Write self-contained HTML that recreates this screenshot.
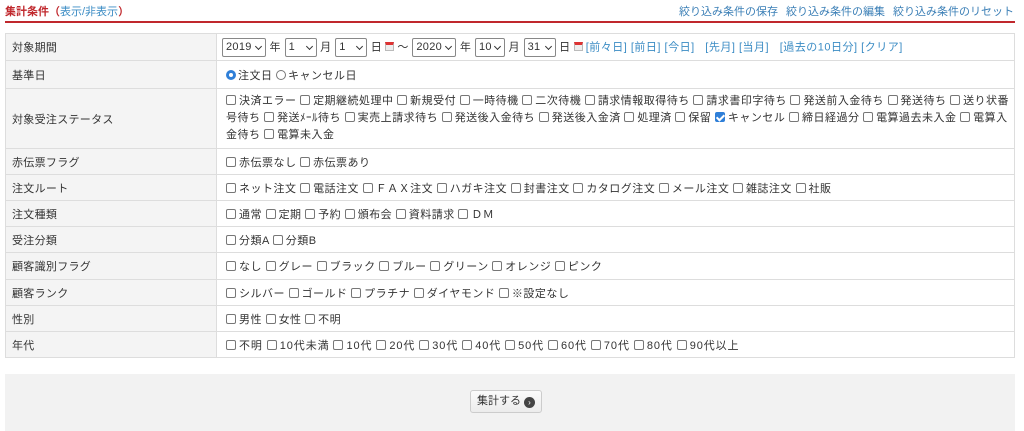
<!DOCTYPE html>
<html><head><meta charset="utf-8"><style>
*{margin:0;padding:0;box-sizing:border-box}
body{width:1024px;height:431px;overflow:hidden;background:#fff;font-family:"Liberation Sans","Noto Sans CJK JP",sans-serif;font-size:11px;color:#333;position:relative}
.title{position:absolute;left:5px;top:3px;font-size:11px;font-weight:bold;color:#c0282d}
.title span{color:#3b8cc4;font-weight:normal}
.links{position:absolute;right:10px;top:3px;color:#3b7fb6;font-size:11px;word-spacing:0}
.links span{margin-left:8px}
.rule{position:absolute;left:5px;top:21px;width:1010px;height:2px;background:#c0282d}
table{position:absolute;left:5px;top:33px;width:1010px;border-collapse:collapse}
td{border:1px solid #ddd;vertical-align:middle;white-space:nowrap}
td.l{width:211px;background:#f4f4f4;padding-left:6px;letter-spacing:0.3px}
td.v{padding-left:9px;background:#fff;letter-spacing:0.5px}
.cb{display:inline-block;width:10px;height:10px;border:1px solid #777;border-radius:2px;vertical-align:-1px;margin-right:3px;background:#fff}
.cb.on{background:#2f7fd8;border-color:#2f7fd8;position:relative}
.cb.on:after{content:"";position:absolute;left:2px;top:0px;width:3px;height:6px;border:solid #fff;border-width:0 2px 2px 0;transform:rotate(45deg)}
.rd{display:inline-block;width:10px;height:10px;border:1px solid #777;border-radius:50%;vertical-align:-1px;margin-right:2px}
.rd.on{border:3px solid #2f7fd8}
.sel{display:inline-block;height:19px;border:1px solid #888;border-radius:2px;vertical-align:middle;padding:0 3px;line-height:17px;font-size:11px;position:relative;letter-spacing:0.3px}
.sel:after{content:"";position:absolute;right:4px;top:5px;width:4px;height:4px;border:solid #333;border-width:0 1.5px 1.5px 0;transform:rotate(45deg)}
.cal{display:inline-block;width:9px;height:9px;border:1px solid #bbb;border-top:3px solid #d33;vertical-align:-1px;margin:0 3px;background:#eee}
.a{color:#3b8cc4;letter-spacing:0.5px}
.bot{position:absolute;left:5px;top:374px;width:1010px;height:57px;background:#f2f2f2}
.btn{position:absolute;left:465px;top:16px;width:72px;height:23px;border:1px solid #ccc;border-radius:3px;background:linear-gradient(#fbfbfb,#ececec);text-align:center;line-height:21px;font-size:11px;color:#333}
.btn i{display:inline-block;width:11px;height:11px;border-radius:50%;background:#444;color:#fff;font-style:normal;font-size:8px;line-height:11px;vertical-align:-1px;margin-left:3px}
</style></head><body>
<div class="title">集計条件（<span>表示/非表示</span>）</div>
<div class="links"><span>絞り込み条件の保存</span><span>絞り込み条件の編集</span><span>絞り込み条件のリセット</span></div>
<div class="rule"></div>
<table>
<tr style="height:27px"><td class="l">対象期間</td><td class="v" style="padding-left:5px"><span class="sel" style="width:44px">2019</span> 年 <span class="sel" style="width:32px">1</span> 月 <span class="sel" style="width:32px">1</span> 日<span class="cal"></span>～ <span class="sel" style="width:44px">2020</span> 年 <span class="sel" style="width:30px">10</span> 月 <span class="sel" style="width:32px">31</span> 日<span class="cal"></span><span class="a">[前々日] [前日] [今日] &nbsp; [先月] [当月] &nbsp; [過去の10日分] [クリア]</span></td></tr>
<tr style="height:28px"><td class="l">基準日</td><td class="v"><span class="rd on"></span>注文日 <span class="rd"></span>キャンセル日</td></tr>
<tr style="height:60px"><td class="l">対象受注ステータス</td><td class="v" style="line-height:17px"><span class="cb"></span>決済エラー <span class="cb"></span>定期継続処理中 <span class="cb"></span>新規受付 <span class="cb"></span>一時待機 <span class="cb"></span>二次待機 <span class="cb"></span>請求情報取得待ち <span class="cb"></span>請求書印字待ち <span class="cb"></span>発送前入金待ち <span class="cb"></span>発送待ち <span class="cb"></span>送り状番<br>号待ち <span class="cb"></span>発送ﾒｰﾙ待ち <span class="cb"></span>実売上請求待ち <span class="cb"></span>発送後入金待ち <span class="cb"></span>発送後入金済 <span class="cb"></span>処理済 <span class="cb"></span>保留 <span class="cb on"></span>キャンセル <span class="cb"></span>締日経過分 <span class="cb"></span>電算過去未入金 <span class="cb"></span>電算入<br>金待ち <span class="cb"></span>電算未入金</td></tr>
<tr style="height:26px"><td class="l">赤伝票フラグ</td><td class="v"><span class="cb"></span>赤伝票なし <span class="cb"></span>赤伝票あり</td></tr>
<tr style="height:26px"><td class="l">注文ルート</td><td class="v"><span class="cb"></span>ネット注文 <span class="cb"></span>電話注文 <span class="cb"></span>ＦＡＸ注文 <span class="cb"></span>ハガキ注文 <span class="cb"></span>封書注文 <span class="cb"></span>カタログ注文 <span class="cb"></span>メール注文 <span class="cb"></span>雑誌注文 <span class="cb"></span>社販</td></tr>
<tr style="height:26px"><td class="l">注文種類</td><td class="v"><span class="cb"></span>通常 <span class="cb"></span>定期 <span class="cb"></span>予約 <span class="cb"></span>頒布会 <span class="cb"></span>資料請求 <span class="cb"></span>ＤＭ</td></tr>
<tr style="height:26px"><td class="l">受注分類</td><td class="v"><span class="cb"></span>分類A <span class="cb"></span>分類B</td></tr>
<tr style="height:27px"><td class="l">顧客識別フラグ</td><td class="v"><span class="cb"></span>なし <span class="cb"></span>グレー <span class="cb"></span>ブラック <span class="cb"></span>ブルー <span class="cb"></span>グリーン <span class="cb"></span>オレンジ <span class="cb"></span>ピンク</td></tr>
<tr style="height:26px"><td class="l">顧客ランク</td><td class="v"><span class="cb"></span>シルバー <span class="cb"></span>ゴールド <span class="cb"></span>プラチナ <span class="cb"></span>ダイヤモンド <span class="cb"></span>※設定なし</td></tr>
<tr style="height:26px"><td class="l">性別</td><td class="v"><span class="cb"></span>男性 <span class="cb"></span>女性 <span class="cb"></span>不明</td></tr>
<tr style="height:26px"><td class="l">年代</td><td class="v" style="letter-spacing:0.9px"><span class="cb"></span>不明 <span class="cb"></span>10代未満 <span class="cb"></span>10代 <span class="cb"></span>20代 <span class="cb"></span>30代 <span class="cb"></span>40代 <span class="cb"></span>50代 <span class="cb"></span>60代 <span class="cb"></span>70代 <span class="cb"></span>80代 <span class="cb"></span>90代以上</td></tr>
</table>
<div class="bot"><div class="btn">集計する<i>›</i></div></div>
</body></html>
